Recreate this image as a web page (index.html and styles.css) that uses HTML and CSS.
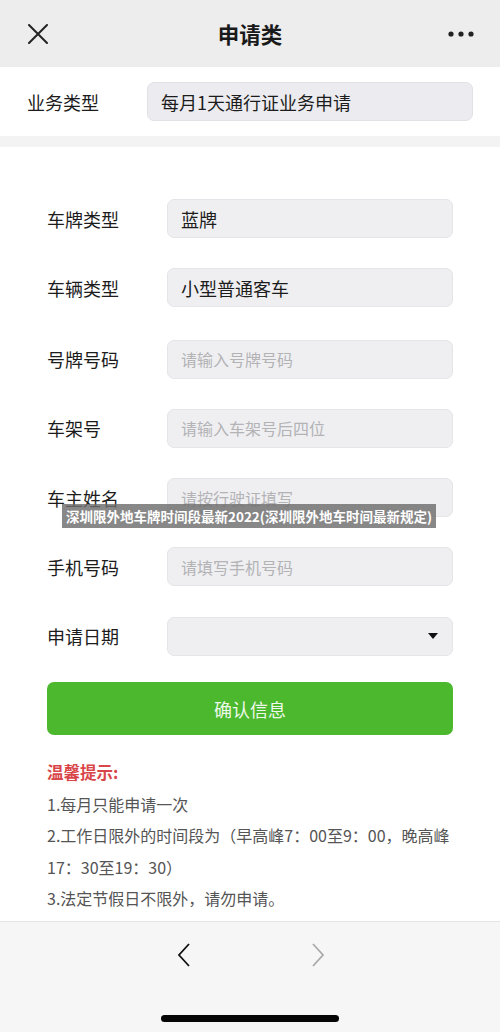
FILE: index.html
```html
<!DOCTYPE html>
<html lang="zh">
<head>
<meta charset="utf-8">
<title>申请类</title>
<link rel="stylesheet" href="styles.css">
</head>
<body>
<div class="page">
  <header class="topbar">
    <svg class="icon-close" width="20" height="20" viewBox="0 0 20 20"><path d="M1 1 L19 19 M19 1 L1 19" stroke="#222" stroke-width="2" fill="none" stroke-linecap="round"/></svg>
    <div class="title">申请类</div>
    <svg class="icon-more" width="26" height="6" viewBox="0 0 26 6"><circle cx="3" cy="3" r="2.6" fill="#222"/><circle cx="13" cy="3" r="2.6" fill="#222"/><circle cx="23" cy="3" r="2.6" fill="#222"/></svg>
  </header>

  <section class="biz">
    <div class="biz-label">业务类型</div>
    <div class="biz-field">每月1天通行证业务申请</div>
  </section>

  <div class="band"></div>

  <main class="form">
    <div class="row"><div class="label">车牌类型</div><div class="field">蓝牌</div></div>
    <div class="row"><div class="label">车辆类型</div><div class="field">小型普通客车</div></div>
    <div class="row"><div class="label">号牌号码</div><div class="field ph">请输入号牌号码</div></div>
    <div class="row"><div class="label">车架号</div><div class="field ph">请输入车架号后四位</div></div>
    <div class="row"><div class="label">车主姓名</div><div class="field ph">请按行驶证填写</div></div>
    <div class="row"><div class="label">手机号码</div><div class="field ph">请填写手机号码</div></div>
    <div class="row"><div class="label">申请日期</div><div class="field select"><span class="caret"></span></div></div>

    <div class="btn">确认信息</div>

    <div class="notes">
      <div class="notes-title">温馨提示:</div>
      <p>1.每月只能申请一次</p>
      <p>2.工作日限外的时间段为（早高峰7：00至9：00，晚高峰17：30至19：30）</p>
      <p>3.法定节假日不限外，请勿申请。</p>
    </div>
  </main>

  <footer class="bottombar">
    <div class="nav">
      <svg width="14" height="24" viewBox="0 0 14 24"><path d="M12 1 L2 12 L12 23" stroke="#111" stroke-width="1.8" fill="none"/></svg>
      <svg width="14" height="24" viewBox="0 0 14 24"><path d="M2 1 L12 12 L2 23" stroke="#aaa" stroke-width="1.8" fill="none"/></svg>
    </div>
    <div class="home-indicator"></div>
  </footer>

  <div class="banner">深圳限外地车牌时间段最新2022(深圳限外地车时间最新规定)</div>
</div>
</body>
</html>
```

FILE: styles.css
```css
* { box-sizing: border-box; }
html, body { margin: 0; padding: 0; }
body {
  width: 500px;
  height: 1032px;
  overflow: hidden;
  background: #ffffff;
  font-family: "Noto Sans CJK SC", "Noto Sans", sans-serif;
  color: #1c1c1c;
}
.page {
  position: relative;
  width: 500px;
  height: 1032px;
  display: flex;
  flex-direction: column;
}
.topbar {
  height: 67px;
  flex: none;
  background: #ededed;
  display: grid;
  grid-template-columns: 1fr auto 1fr;
  align-items: center;
  padding: 0 26px 0 28px;
}
.icon-close { justify-self: start; margin-top: 1px; }
.icon-more { justify-self: end; margin-top: 1px; }
.title {
  font-size: 21.5px;
  font-weight: 700;
  color: #1a1a1a;
  margin-left: -2px;
}

.biz {
  height: 69px;
  flex: none;
  display: flex;
  align-items: center;
  padding: 0 27px;
  background: #fff;
}
.biz-label {
  width: 120px;
  font-size: 18px;
  color: #1c1c1c;
}
.biz-field {
  flex: 1;
  height: 39px;
  display: flex;
  align-items: center;
  padding-left: 13px;
  background: #ececf0;
  border: 1px solid #e2e2e6;
  border-radius: 7px;
  font-size: 18px;
  color: #1c1c1c;
}
.band {
  height: 11px;
  flex: none;
  background: #f3f3f3;
}

.form {
  flex: 1;
  padding: 52px 47px 0;
  display: flex;
  flex-direction: column;
  background: #fff;
}
.row {
  display: flex;
  align-items: center;
  height: 39px;
  margin-bottom: 30.3px;
}
.row:nth-child(3) { margin-top: 2px; }
.label {
  width: 120px;
  font-size: 18px;
  color: #1c1c1c;
}
.field {
  flex: 1;
  height: 39px;
  display: flex;
  align-items: center;
  padding-left: 13px;
  background: #efeff2;
  border: 1px solid #e5e5e9;
  border-radius: 7px;
  font-size: 18px;
  color: #1c1c1c;
}
.field.ph { color: #b3b3b6; font-size: 16px; }
.field.select { justify-content: flex-end; padding-right: 14px; }
.caret {
  width: 0; height: 0;
  border-left: 5.5px solid transparent;
  border-right: 5.5px solid transparent;
  border-top: 6px solid #111;
}
.btn {
  margin-top: -4px;
  height: 53px;
  border-radius: 7px;
  background: #4bb82e;
  color: #eef8ea;
  font-size: 18px;
  display: flex;
  align-items: center;
  justify-content: center;
}
.notes {
  margin-top: 22px;
  font-size: 16px;
  line-height: 31.5px;
  color: #555;
}
.notes-title {
  color: #d9464a;
  font-weight: 700;
  font-size: 16.5px;
}
.notes p { margin: 0; }

.bottombar {
  height: 111px;
  flex: none;
  background: #f6f6f6;
  border-top: 1px solid #e6e6e6;
  display: flex;
  flex-direction: column;
  align-items: center;
}
.nav {
  margin-top: 21px;
  width: 150px;
  display: flex;
  justify-content: space-between;
  padding-left: 2px;
}
.home-indicator {
  margin-top: 48px;
  width: 178px;
  height: 7px;
  border-radius: 4px;
  background: #050505;
}

.banner {
  position: absolute;
  left: 62px;
  top: 504px;
  width: 374px;
  height: 24px;
  background: rgba(110, 110, 110, 0.82);
  color: #fff;
  font-size: 13.5px;
  font-weight: 700;
  display: flex;
  align-items: center;
  justify-content: center;
  white-space: nowrap;
}
```
